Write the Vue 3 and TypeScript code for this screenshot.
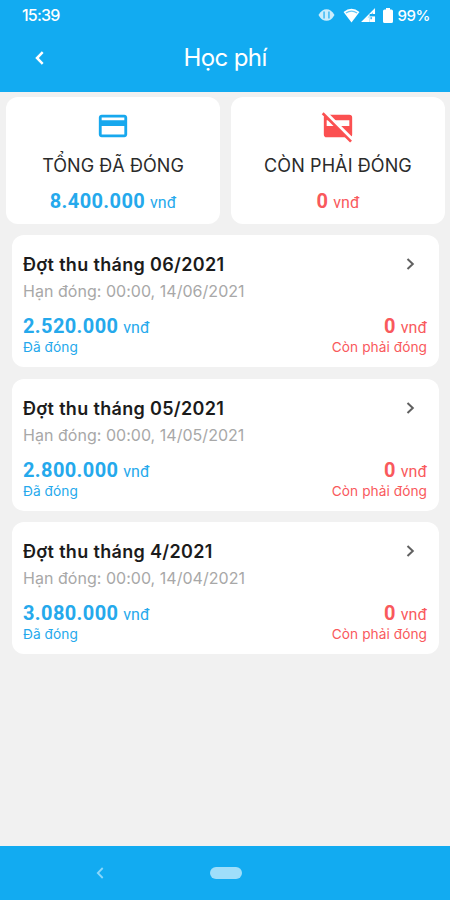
<script setup lang="ts">
interface Period {
  title: string
  due: string
  paid: string
  owed: string
}

const periods: Period[] = [
  { title: 'Đợt thu tháng 06/2021', due: '00:00, 14/06/2021', paid: '2.520.000', owed: '0' },
  { title: 'Đợt thu tháng 05/2021', due: '00:00, 14/05/2021', paid: '2.800.000', owed: '0' },
  { title: 'Đợt thu tháng 4/2021', due: '00:00, 14/04/2021', paid: '3.080.000', owed: '0' },
]
</script>

<template>
  <div class="screen">
    <header class="header">
      <div class="status">
        <span class="clock">15:39</span>
        <div class="status-icons">
          <svg class="eye" width="17" height="14" viewBox="0 0 18 14">
            <path d="M.5 7 Q4 .8 9 .8 T17.5 7 Q14 13.2 9 13.2 T.5 7Z" fill="#fff" fill-opacity=".78" />
            <path d="M6.4 3.4V10.6M11.6 3.4V10.6" stroke="#12abf1" stroke-width="1.2" />
          </svg>
          <svg class="wifi" width="17" height="15" viewBox="0 0 18 16">
            <path d="M.5 4.2Q9-2.8 17.5 4.2L9 15.5Z" fill="#fff" />
            <path d="M3 5.4Q9 1.2 15 5.4" fill="none" stroke="#12abf1" stroke-opacity=".65" stroke-width="1.3" />
          </svg>
          <svg class="signal" width="15" height="14" viewBox="0 0 16 15">
            <path d="M0 15 15 0V6.5H9.2V15Z" fill="#fff" />
            <path d="M7 10.2 12.8 4.5V8H8.5V10.2Z" fill="#12abf1" fill-opacity=".55" />
            <path d="M9.2 9H15V15H9.2Z" fill="#fff" />
            <path d="M10 9.8H11.8V12H10Z" fill="#12abf1" fill-opacity=".8" />
          </svg>
          <svg class="battery" width="10" height="15" viewBox="0 0 10 15">
            <path d="M3 0H7V1.5H8.4Q10 1.5 10 3V13.4Q10 15 8.4 15H1.6Q0 15 0 13.4V3Q0 1.5 1.6 1.5H3Z" fill="#fff" />
          </svg>
          <span class="percent">99%</span>
        </div>
      </div>
      <div class="appbar">
        <svg class="back" width="9" height="14" viewBox="0 0 9 14">
          <path d="M7.7 1.2 2 7l5.7 5.8" fill="none" stroke="#fff" stroke-width="2.5" />
        </svg>
        <h1 class="title">Học phí</h1>
      </div>
    </header>

    <main class="content">
      <section class="summary">
        <div class="total">
          <svg class="card-icon" width="34" height="34" viewBox="0 0 24 24">
            <path fill="#17a8ee" d="M20 4H4c-1.11 0-1.99.89-1.99 2L2 18c0 1.11.89 2 2 2h16c1.11 0 2-.89 2-2V6c0-1.11-.89-2-2-2zm0 14H4v-6h16v6zm0-10H4V6h16v2z" />
          </svg>
          <p class="total-label">TỔNG ĐÃ ĐÓNG</p>
          <p class="money blue"><b>8.400.000</b> <span class="unit">vnđ</span></p>
        </div>
        <div class="total">
          <svg class="card-icon" width="34" height="34" viewBox="0 0 24 24">
            <path fill="#fb5051" fill-rule="evenodd" d="M4 4H20Q22 4 22 6V18Q22 20 20 20H4Q2 20 2 18V6Q2 4 4 4ZM4 8V12H20V8Z" />
            <path d="M2.4 2 23.4 23" stroke="#fff" stroke-width="2.8" />
            <path d="M1.2 3 21.2 23" stroke="#fb5051" stroke-width="1.9" />
          </svg>
          <p class="total-label owed-label">CÒN PHẢI ĐÓNG</p>
          <p class="money red"><b>0</b> <span class="unit">vnđ</span></p>
        </div>
      </section>

      <section class="periods">
        <article v-for="p in periods" :key="p.title" class="period">
          <div class="period-head">
            <h2 class="period-title">{{ p.title }}</h2>
            <svg class="chevron" width="9" height="12" viewBox="0 0 9 12">
              <path d="M1.5 1 6.8 6 1.5 11" fill="none" stroke="#606060" stroke-width="2" />
            </svg>
          </div>
          <p class="due">Hạn đóng: {{ p.due }}</p>
          <div class="amounts">
            <div class="blue">
              <p class="money"><b>{{ p.paid }}</b> <span class="unit">vnđ</span></p>
              <p class="caption">Đã đóng</p>
            </div>
            <div class="red right">
              <p class="money"><b>{{ p.owed }}</b> <span class="unit">vnđ</span></p>
              <p class="caption">Còn phải đóng</p>
            </div>
          </div>
        </article>
      </section>
    </main>

    <nav class="navbar">
      <svg class="nav-back" width="8" height="12" viewBox="0 0 8 12">
        <path d="M6.7 1 1.8 6l4.9 5" fill="none" stroke="#8bd7fa" stroke-width="1.8" />
      </svg>
      <span class="home"></span>
    </nav>
  </div>
</template>

<style>
body {
  margin: 0;
}
</style>

<style scoped>
.screen {
  display: flex;
  flex-direction: column;
  width: 450px;
  height: 900px;
  background: #f1f1f1;
  font-family: Inter, "Liberation Sans", sans-serif;
}
h1, h2, p {
  margin: 0;
  font-weight: 400;
  white-space: nowrap;
}
.header {
  height: 92px;
  background: #12abf1;
  color: #fff;
}
.status {
  display: flex;
  justify-content: space-between;
  align-items: center;
  height: 30px;
  padding: 0 20px 0 22px;
  font-size: 16px;
  font-weight: 500;
}
.clock {
  letter-spacing: -0.8px;
}
.status-icons {
  display: flex;
  align-items: center;
}
.wifi {
  margin-left: 8px;
}
.signal {
  margin-left: 1px;
}
.battery {
  margin: 0 4px 0 7px;
}
.percent {
  font-size: 15px;
  letter-spacing: -0.4px;
}
.appbar {
  display: grid;
  grid-template-columns: 80px 1fr 80px;
  align-items: center;
  height: 56px;
}
.back {
  margin-left: 35px;
}
.title {
  text-align: center;
  font-size: 24px;
  line-height: 32px;
  letter-spacing: -0.6px;
}
.content {
  flex: 1;
  padding: 5px 5px 0 6px;
}
.summary {
  display: grid;
  grid-template-columns: 1fr 1fr;
  gap: 11px;
}
.total {
  display: flex;
  flex-direction: column;
  align-items: center;
  height: 127px;
  padding-top: 12px;
  box-sizing: border-box;
  border-radius: 12px;
  background: #fff;
}
.total-label {
  margin-top: 11px;
  font-size: 18px;
  line-height: 24px;
  letter-spacing: 0.05px;
  color: #2b2b2b;
}
.owed-label {
  letter-spacing: 0.1px;
}
.total .money {
  margin-top: 11px;
}
.periods {
  display: flex;
  flex-direction: column;
  gap: 11.5px;
  padding: 11px 6px 0;
}
.period {
  height: 132px;
  padding: 17px 12px 0 11px;
  box-sizing: border-box;
  border-radius: 12px;
  background: #fff;
}
.period-head {
  display: flex;
  justify-content: space-between;
  align-items: center;
}
.period-title {
  font-size: 18px;
  font-weight: 600;
  line-height: 26px;
  letter-spacing: 0.33px;
  color: #1b1b1b;
}
.chevron {
  margin: 0 12px 2px 0;
}
.due {
  margin-top: 2px;
  font-size: 16px;
  line-height: 22px;
  letter-spacing: 0.03px;
  color: #a8a8a8;
}
.amounts {
  display: flex;
  justify-content: space-between;
  margin-top: 12px;
}
.money {
  font-family: Roboto, "Liberation Sans", sans-serif;
  font-size: 20px;
  line-height: 24px;
}
.money b {
  font-weight: 700;
  letter-spacing: 0.38px;
}
.unit {
  font-size: 16px;
}
.caption {
  margin-top: -2px;
  font-size: 13.7px;
  line-height: 18px;
  letter-spacing: 0.05px;
}
.blue {
  color: #25a9ec;
}
.red {
  color: #f9595c;
}
.right {
  text-align: right;
}
.navbar {
  display: flex;
  align-items: center;
  height: 54px;
  background: #12abf1;
}
.nav-back {
  margin-left: 96px;
}
.home {
  width: 32px;
  height: 12px;
  margin-left: 106px;
  border-radius: 6px;
  background: #9fdefa;
}
</style>
